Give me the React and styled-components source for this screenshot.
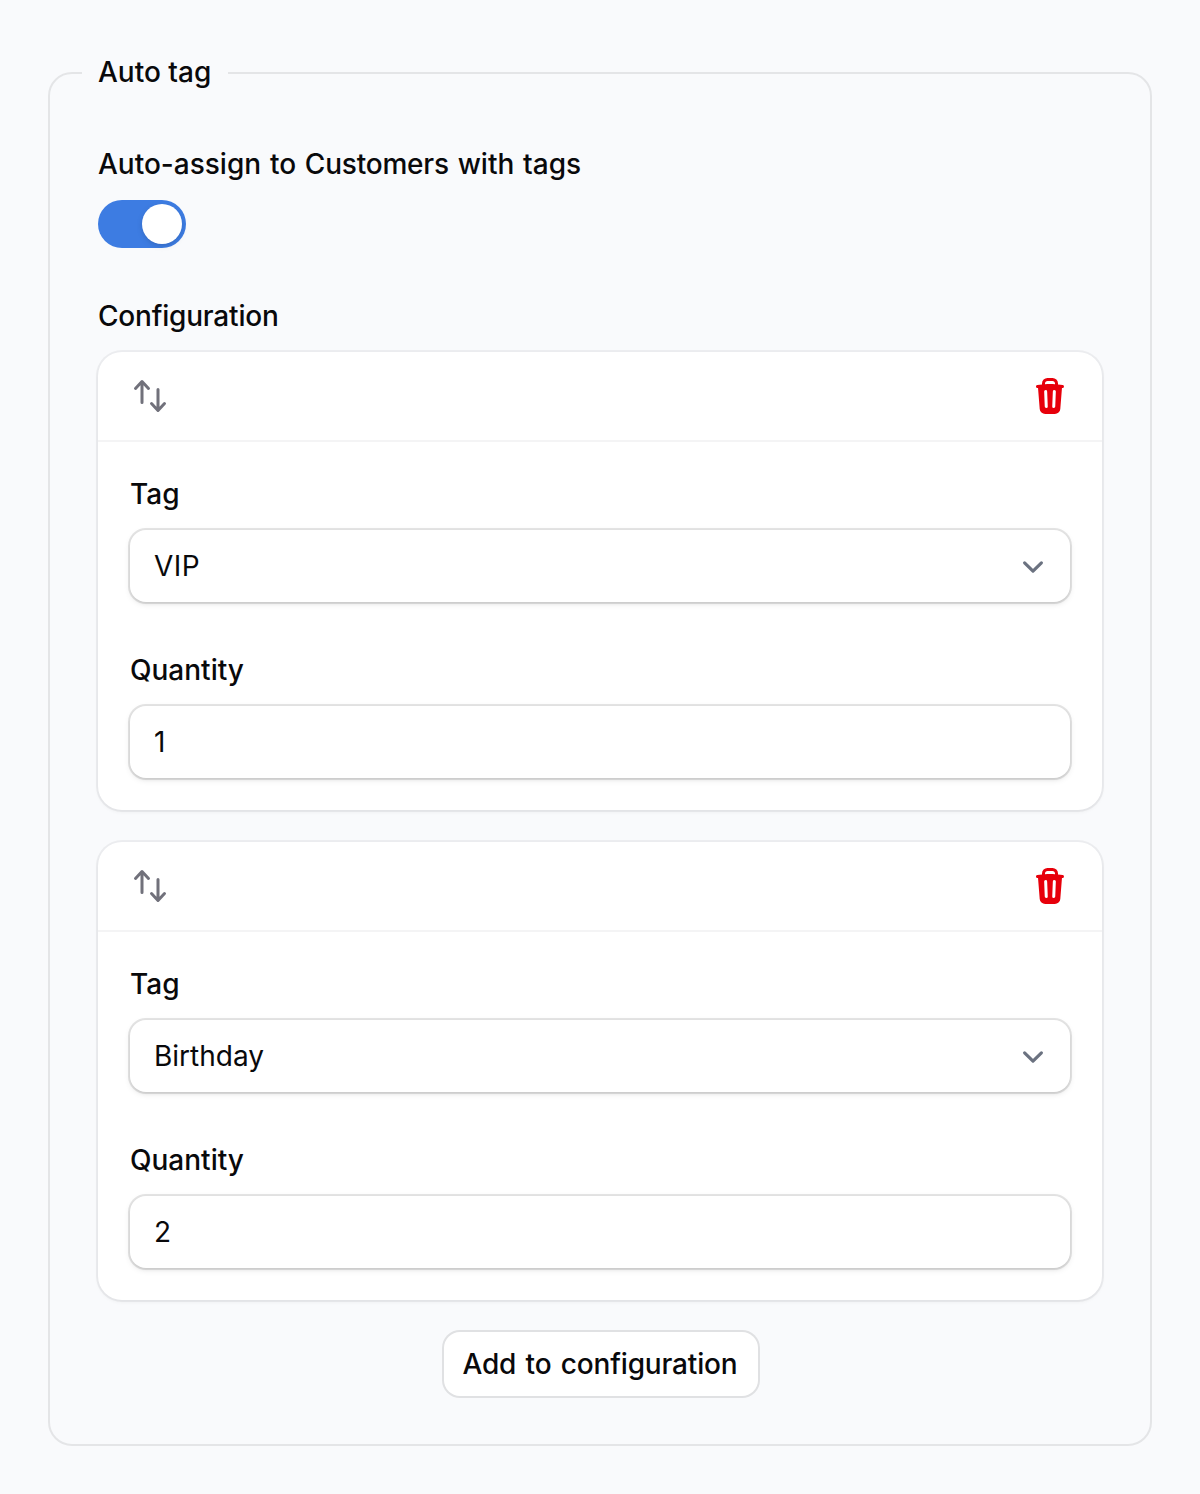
import React, { useState } from 'react';
import styled, { createGlobalStyle, css } from 'styled-components';
import { HiMiniArrowsUpDown, HiMiniTrash } from 'react-icons/hi2';

const TAGS = ['VIP', 'Birthday'];

const INITIAL_ITEMS = [
  { id: 1, tag: 'VIP', quantity: '1' },
  { id: 2, tag: 'Birthday', quantity: '2' },
];

const ConfigurationItem = ({ item, onChange, onDelete }) => (
  <Card>
    <CardHeader>
      <IconButton type='button' aria-label='Move'>
        <HiMiniArrowsUpDown />
      </IconButton>
      <IconButton type='button' aria-label='Delete' $danger onClick={onDelete}>
        <HiMiniTrash />
      </IconButton>
    </CardHeader>
    <CardBody>
      <Field>
        <Label>Tag</Label>
        <InputFrame>
          <Select
            value={item.tag}
            $tracking={item.tag === 'VIP' ? '0.5px' : 'normal'}
            onChange={(e) => onChange({ tag: e.target.value })}
          >
            {TAGS.map((tag) => (
              <option key={tag} value={tag}>{tag}</option>
            ))}
          </Select>
          <Chevron viewBox='0 0 20 20' fill='none'>
            <path d='M6 8l4 4 4-4' stroke='currentColor' strokeWidth='1.5' strokeLinecap='round' strokeLinejoin='round' />
          </Chevron>
        </InputFrame>
      </Field>
      <Field>
        <Label>Quantity</Label>
        <InputFrame>
          <Input value={item.quantity} onChange={(e) => onChange({ quantity: e.target.value })} />
        </InputFrame>
      </Field>
    </CardBody>
  </Card>
);

const App = () => {
  const [enabled, setEnabled] = useState(true);
  const [items, setItems] = useState(INITIAL_ITEMS);

  const updateItem = (id, values) => {
    setItems(items.map((item) => (item.id === id ? { ...item, ...values } : item)));
  };

  const addItem = () => {
    setItems([...items, { id: Date.now(), tag: TAGS[0], quantity: '1' }]);
  };

  return (
    <>
      <GlobalStyle />
      <Page>
        <Fieldset>
          <Legend>Auto tag</Legend>
          <Fields>
            <Field>
              <Label>Auto-assign to <Tight>Customers</Tight> with tags</Label>
              <Toggle type='button' role='switch' aria-checked={enabled} $on={enabled} onClick={() => setEnabled(!enabled)}>
                <Knob />
              </Toggle>
            </Field>
            <Field>
              <Label><Tight>Configuration</Tight></Label>
              <Repeater>
                {items.map((item) => (
                  <ConfigurationItem
                    key={item.id}
                    item={item}
                    onChange={(values) => updateItem(item.id, values)}
                    onDelete={() => setItems(items.filter(({ id }) => id !== item.id))}
                  />
                ))}
                <AddButton type='button' onClick={addItem}>Add to configuration</AddButton>
              </Repeater>
            </Field>
          </Fields>
        </Fieldset>
      </Page>
    </>
  );
};

const GlobalStyle = createGlobalStyle`
  * {
    box-sizing: border-box;
  }

  body {
    margin: 0;
    background: #f9fafc;
    color: #09090b;
    font-family: Inter, sans-serif;
  }

  button, input, select {
    margin: 0;
    border: 0;
    color: inherit;
    font-family: inherit;
  }
`;

const Medium28 = css`
  font-size: 28px;
  font-weight: 500;
  line-height: 40px;
`;

const Page = styled.main`
  padding: 49px 48px 48px;
`;

const Fieldset = styled.fieldset`
  min-width: 0;
  margin: 0;
  padding: 47px 48px 48px;
  border: 2px solid #e4e5e7;
  border-radius: 24px;
`;

const Legend = styled.legend`
  ${Medium28}
  line-height: 46px;
  margin-left: -16px;
  padding: 0 17px 2px 16px;
`;

const Fields = styled.div`
  display: flex;
  flex-direction: column;
  gap: 48px;
`;

const Field = styled.div`
  display: flex;
  flex-direction: column;
  align-items: stretch;
  gap: 16px;
`;

const Label = styled.label`
  ${Medium28}
  word-spacing: 1.3px;
`;

const Tight = styled.span`
  letter-spacing: -0.2px;
`;

const Toggle = styled.button`
  display: flex;
  justify-content: ${({ $on }) => ($on ? 'flex-end' : 'flex-start')};
  width: 88px;
  height: 48px;
  padding: 4px;
  border-radius: 24px;
  background: ${({ $on }) => ($on ? '#3d7ce2' : '#e4e4e7')};
  cursor: pointer;
`;

const Knob = styled.span`
  width: 40px;
  height: 40px;
  border-radius: 50%;
  background: #fff;
  box-shadow: 0 2px 6px rgba(0, 0, 0, 0.1), 0 2px 4px -2px rgba(0, 0, 0, 0.1);
`;

const Repeater = styled.div`
  display: flex;
  flex-direction: column;
  gap: 32px;
`;

const Card = styled.section`
  border-radius: 24px;
  background: #fff;
  box-shadow: 0 0 0 2px rgba(9, 9, 11, 0.05), 0 2px 4px rgba(0, 0, 0, 0.05);
`;

const CardHeader = styled.header`
  display: flex;
  align-items: center;
  justify-content: space-between;
  padding: 24px 32px;
`;

const IconButton = styled.button`
  display: flex;
  padding: 0;
  background: none;
  color: ${({ $danger }) => ($danger ? '#e7000b' : '#71717b')};
  cursor: pointer;

  svg {
    width: 40px;
    height: 40px;
  }
`;

const CardBody = styled.div`
  display: flex;
  flex-direction: column;
  gap: 48px;
  padding: 32px;
  border-top: 2px solid #f4f4f5;
`;

const InputFrame = styled.div`
  display: grid;
  align-items: center;
  height: 72px;
  border-radius: 16px;
  background: #fff;
  box-shadow: 0 0 0 2px rgba(9, 9, 11, 0.1), 0 2px 6px rgba(0, 0, 0, 0.1), 0 2px 4px -2px rgba(0, 0, 0, 0.1);

  > * {
    grid-area: 1 / 1;
  }
`;

const Input = styled.input`
  width: 100%;
  height: 72px;
  padding: 0 24px;
  background: none;
  outline: none;
  font-size: 28px;
  line-height: 48px;
  letter-spacing: ${({ $tracking }) => $tracking || 'normal'};
`;

const Select = styled(Input).attrs({ as: 'select' })`
  appearance: none;
`;

const Chevron = styled.svg`
  justify-self: end;
  width: 42px;
  height: 42px;
  margin: 2px 16px 0 0;
  color: #6b7280;
  pointer-events: none;
`;

const AddButton = styled.button`
  ${Medium28}
  align-self: center;
  width: 314px;
  height: 64px;
  margin-left: 2px;
  padding: 0 2px 0 0;
  border-radius: 16px;
  background: #fff;
  box-shadow: 0 0 0 2px rgba(9, 9, 11, 0.1);
  letter-spacing: -0.15px;
  word-spacing: 2px;
  cursor: pointer;
`;

export default App;
